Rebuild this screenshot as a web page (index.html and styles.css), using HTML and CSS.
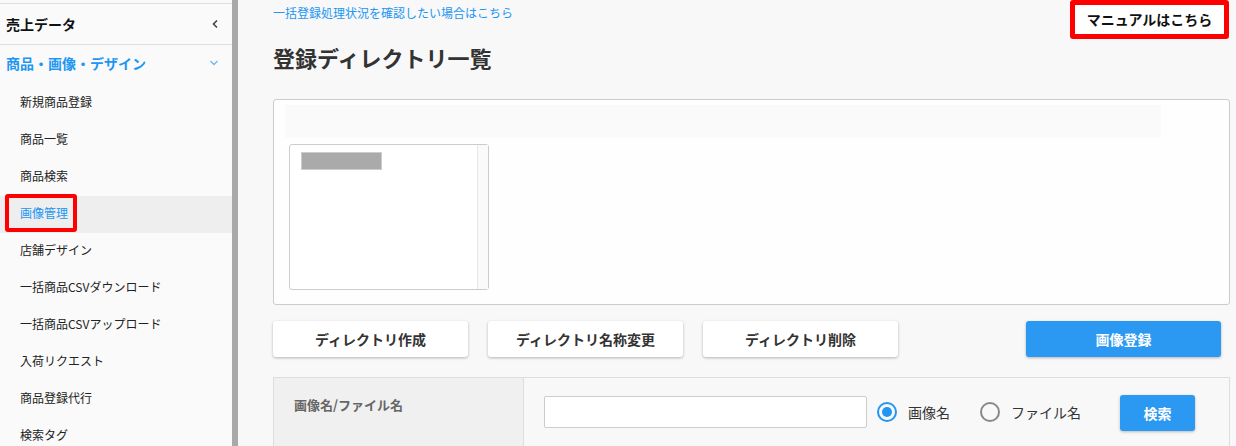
FILE: index.html
```html
<!DOCTYPE html>
<html lang="ja">
<head>
  <meta charset="UTF-8">
  <title>画像管理</title>
  <link rel="stylesheet" href="styles.css">
</head>
<body>
<div class="page">
  <!--サイドメニュー-->
  <div class="side">
    <ul class="menu">
      <li class="group">
        <span>売上データ</span>
        <svg class="chev" width="8" height="10" viewBox="0 0 8 10"><path d="M6 1.5 L2.5 5 L6 8.5" fill="none" stroke="#444" stroke-width="1.6"/></svg>
      </li>
      <li class="group open">
        <span>商品・画像・デザイン</span>
        <svg class="chev" width="10" height="8" viewBox="0 0 10 8"><path d="M1.5 2 L5 5.5 L8.5 2" fill="none" stroke="#6fb6f0" stroke-width="1.3"/></svg>
      </li>
      <li class="sub">新規商品登録</li>
      <li class="sub">商品一覧</li>
      <li class="sub">商品検索</li>
      <li class="sub current"><span class="mark">画像管理</span></li>
      <li class="sub">店舗デザイン</li>
      <li class="sub">一括商品CSVダウンロード</li>
      <li class="sub">一括商品CSVアップロード</li>
      <li class="sub">入荷リクエスト</li>
      <li class="sub">商品登録代行</li>
      <li class="sub">検索タグ</li>
    </ul>
  </div>

  <!--メイン-->
  <div class="main">
    <div class="top">
      <a class="status-link" href="#">一括登録処理状況を確認したい場合はこちら</a>
      <a class="manual" href="#">マニュアルはこちら</a>
    </div>
    <h1 class="title">登録ディレクトリ一覧</h1>

    <div class="dir-box">
      <div class="dir-band"></div>
      <div class="dir-list">
        <div class="dir-items">
          <div class="dir-item"></div>
        </div>
        <div class="dir-scroll"></div>
      </div>
    </div>

    <div class="actions">
      <button class="btn">ディレクトリ作成</button>
      <button class="btn">ディレクトリ名称変更</button>
      <button class="btn">ディレクトリ削除</button>
      <button class="btn btn-blue">画像登録</button>
    </div>

    <div class="search">
      <div class="search-label">画像名/ファイル名</div>
      <div class="search-body">
        <input class="search-input" type="text">
        <label class="radio"><span class="dot checked"></span>画像名</label>
        <label class="radio"><span class="dot"></span>ファイル名</label>
        <button class="btn-search">検索</button>
      </div>
    </div>
  </div>
</div>
</body>
</html>
```

FILE: styles.css
```css
* {
  padding: 0;
  margin: 0;
  list-style: none;
  box-sizing: border-box;
}

body {
  font-family: "Noto Sans CJK JP", "Noto Sans", sans-serif;
  color: #333;
  background: #f8f8f8;
}

.page {
  display: flex;
  height: 446px;
  overflow: hidden;
}

/* サイドメニュー */
.side {
  width: 238px;
  flex-shrink: 0;
  background: #fafafa;
  border-right: 6px solid #a9a9a9;
  padding-top: 3px;
}

.menu .group {
  display: flex;
  justify-content: space-between;
  align-items: center;
  padding: 0 13px 0 6px;
  font-size: 14px;
  font-weight: bold;
  color: #111;
}

.menu .group:first-child {
  height: 42px;
  border-top: 1px solid #ddd;
  border-bottom: 1px solid #ddd;
}

.menu .group.open {
  height: 40px;
  padding-bottom: 4px;
  color: #2196f3;
}

.menu .sub {
  height: 37px;
  line-height: 33px;
  padding-left: 20px;
  font-size: 12px;
  color: #222;
}

.menu .sub.current {
  background: #eee;
  color: #2196f3;
  padding-left: 5px;
}

.mark {
  display: inline-block;
  vertical-align: top;
  margin-top: -2px;
  line-height: 30px;
  padding: 0 5px 0 11px;
  border: 4px solid #f00;
  border-radius: 3px;
}

/* メイン */
.main {
  flex: 1;
  padding: 0 6px 0 35px;
}

.top {
  display: flex;
  justify-content: space-between;
  align-items: flex-start;
  height: 40px;
}

.status-link {
  margin-top: 5px;
  font-size: 12px;
  line-height: 16px;
  color: #2196f3;
  text-decoration: none;
}

.manual {
  width: 159px;
  height: 39px;
  margin-right: 1px;
  border: 5px solid #f00;
  border-radius: 3px;
  background: #fff;
  font-size: 14px;
  font-weight: bold;
  line-height: 29px;
  text-align: center;
  color: #111;
  text-decoration: none;
}

.title {
  font-size: 22px;
  line-height: 30px;
  margin-top: 2px;
  color: #333;
}

.dir-box {
  margin-top: 27px;
  height: 206px;
  border: 1px solid #ccc;
  border-radius: 3px;
  background: #fefefe;
  padding: 5px 0 0 11px;
}

.dir-band {
  width: 876px;
  height: 33px;
  background: #fafafa;
}

.dir-list {
  display: flex;
  width: 200px;
  height: 146px;
  margin: 6px 0 0 4px;
  border: 1px solid #ccc;
  border-radius: 3px;
  background: #fff;
}

.dir-items {
  flex: 1;
  padding: 7px 0 0 11px;
}

.dir-item {
  width: 81px;
  height: 18px;
  background: #aaa;
  border: 1px solid #ccc;
}

.dir-scroll {
  width: 11px;
  border-left: 1px solid #e6e6e6;
  background: #fafafa;
}

.actions {
  display: flex;
  gap: 20px;
  margin-top: 16px;
  padding-right: 9px;
}

.btn {
  width: 195px;
  height: 36px;
  border: 0;
  border-radius: 3px;
  background: #fff;
  box-shadow: 0 1px 3px rgba(0, 0, 0, 0.28);
  font-family: inherit;
  font-size: 14px;
  font-weight: bold;
  color: #333;
  cursor: pointer;
}

.btn-blue {
  margin-left: auto;
  background: #2b99f2;
  color: #fff;
}

.search {
  display: flex;
  margin-top: 20px;
  height: 90px;
  border: 1px solid #ddd;
}

.search-label {
  width: 250px;
  background: #f0f0f0;
  border-right: 1px solid #ddd;
  padding: 18px 0 0 20px;
  font-size: 13px;
  font-weight: bold;
  line-height: 18px;
  color: #666;
}

.search-body {
  flex: 1;
  display: flex;
  align-items: flex-start;
  padding: 17px 0 0 20px;
  background: #f8f8f8;
}

.search-input {
  width: 323px;
  height: 32px;
  margin-top: 1px;
  border: 1px solid #ccc;
  border-radius: 2px;
  background: #fff;
}

.radio {
  display: flex;
  align-items: center;
  height: 34px;
  margin-left: 10px;
  margin-right: 21px;
  font-size: 14px;
  color: #333;
}

.radio + .radio {
  margin-left: 9px;
}

.dot {
  width: 20px;
  height: 20px;
  margin-right: 11px;
  border: 2px solid #888;
  border-radius: 50%;
  position: relative;
}

.dot.checked {
  border-color: #2196f3;
}

.dot.checked::after {
  content: "";
  position: absolute;
  left: 3px;
  top: 3px;
  width: 10px;
  height: 10px;
  border-radius: 50%;
  background: #2196f3;
}

.btn-search {
  width: 75px;
  height: 36px;
  margin-left: 18px;
  border: 0;
  border-radius: 3px;
  background: #2b99f2;
  box-shadow: 0 1px 3px rgba(0, 0, 0, 0.25);
  font-family: inherit;
  font-size: 14px;
  font-weight: bold;
  color: #fff;
}
```
